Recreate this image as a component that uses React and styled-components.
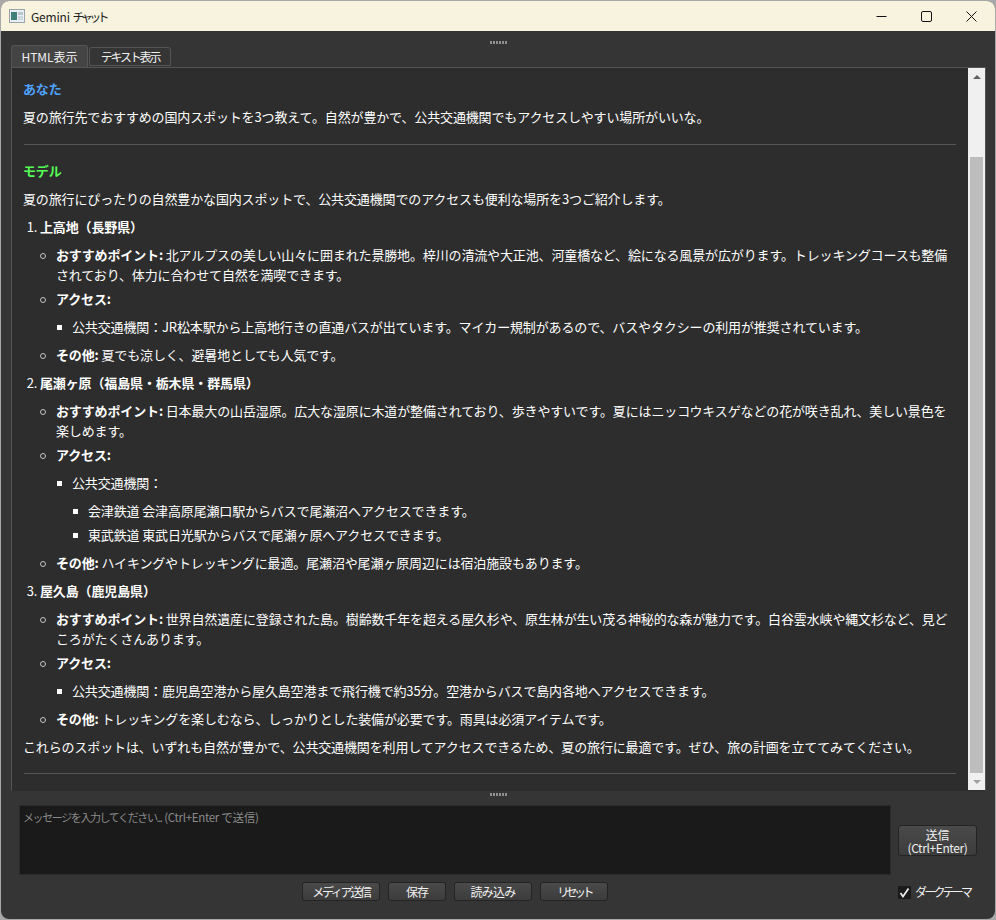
import React from "react";
import styled, { createGlobalStyle } from "styled-components";

const Global = createGlobalStyle`
  html, body { margin: 0; padding: 0; background: #9a9a9a; }
  #root { width: 996px; height: 920px; overflow: hidden; }
`;
const Page = styled.div`
  width: 996px; height: 920px; box-sizing: border-box; padding: 1px; background: #a8a8a8;
`;
const Win = styled.div`
  height: 100%; display: flex; flex-direction: column; border-radius: 8px; overflow: hidden; background: #353535;
  font-family: "Noto Sans CJK JP", "Noto Sans", sans-serif; font-size: 13px; color: #fff;
`;
const Squeeze = styled.span`
  letter-spacing: ${p => p.$ls}px;
  ${p => p.$fs ? `font-size: ${p.$fs}px;` : ""}
`;
const TitleBar = styled.div`
  height: 30px; flex: none; background: #f8f3de; display: flex; align-items: center; padding-left: 8px; color: #222;
  font-size: 12px;
`;
const TitleText = styled.span` margin-left: 6px; flex: 1; `;
const WinBtn = styled.div`
  width: 45px; height: 30px; display: flex; align-items: center; justify-content: center; margin-right: ${p => p.$mr || 0}px;
`;
const Grip = styled.div`
  height: ${p => p.$h}px; flex: none; display: flex; align-items: center; justify-content: center; padding-top: ${p => p.$pt || 0}px; padding-bottom: ${p => p.$pb || 0}px; box-sizing: border-box;
`;
const GripDots = styled.div`
  width: 17px; height: 3px; flex: none;
  background: repeating-linear-gradient(90deg, #8f8f8f 0 2px, transparent 2px 3px);
`;
const Body = styled.div`
  flex: none; padding: 0 10px;
`;
const Tabs = styled.div`
  display: flex; align-items: flex-end; height: 23px; gap: 1px;
`;
const Tab = styled.div`
  height: ${p => p.$on ? 22 : 19}px; width: ${p => p.$w}px; box-sizing: border-box; display: flex; align-items: center; justify-content: center;
  margin-bottom: ${p => p.$on ? 0 : 1}px;
  background: ${p => p.$on ? "#444" : "#353535"}; border: 1px solid #555; border-bottom: ${p => p.$on ? "none" : "1px solid #555"}; border-radius: 3px 3px 0 0; font-size: 12px; color: #f0f0f0;
`;
const Pane = styled.div`
  height: 724px; box-sizing: border-box; width: 975px; display: flex; background: #2d2d2d; border: 1px solid #555; border-bottom-color: #2d2d2d;
`;
const Content = styled.div`
  flex: 1; min-width: 0; padding: 11px 12px 0 11px; overflow: hidden; line-height: 20px; letter-spacing: -0.14px;
`;
const Sender = styled.div`
  font-weight: 700; color: ${p => p.$c}; margin-bottom: 8px;
`;
const Para = styled.p` margin: 0 0 8px; `;
const Rule = styled.div`
  height: 1px; background: #555; margin: ${p => p.$t}px 0 16px 1px;
`;
const Ol = styled.ol` margin: 0; padding: 0 0 0 17px; list-style: decimal; `;
const OlItem = styled.li`
  margin-bottom: 8px; font-weight: 700;
  &::marker { font-weight: 400; }
`;
const Ul = styled.ul`
  margin: 8px 0 0; padding: 0 0 0 16px; list-style: none; font-weight: 400;
`;
const Li = styled.li`
  position: relative;
  margin-bottom: ${p => p.$mb ?? 4}px;
  &:last-child { margin-bottom: 0; }
  &::before {
    content: ""; position: absolute; box-sizing: border-box; top: 8px;
    ${p => p.$square
      ? "left: -15px; width: 5px; height: 5px; background: #fff;"
      : "left: -16px; width: 6px; height: 6px; border: 1px solid #c4c4c4; border-radius: 50%;"}
  }
`;
const Strong = styled.strong` font-weight: 700; `;

const Bar = styled.div`
  width: 17px; flex: none; background: #f0f0f0; display: flex; flex-direction: column; align-items: center; height: 100%;
`;
const Arrow = styled.div`
  width: 0; height: 0; border-left: 4px solid transparent; border-right: 4px solid transparent; flex: none;
  ${p => p.$down ? "border-top: 4px solid #a0a0a0;" : "border-bottom: 4px solid #606060;"}
  margin-top: 7px;
`;
const Thumb = styled.div`
  width: 13px; height: 616px; background: #bdbdbd; margin-top: 78px; flex: none;
`;
const Bottom = styled.div`
  display: grid; grid-template-columns: 872px 1fr; column-gap: 7px; padding-left: 18px;
`;
const Input = styled.div`
  height: 70px; box-sizing: border-box; background: #1a1a1a; border: 1px solid #2b2b2b; padding: 2px 3px; font-size: 12px; line-height: 17px; color: #8a8a8a;
`;
const SendCol = styled.div`
  display: flex; align-items: flex-end; padding-bottom: 19px;
`;
const Btn = styled.div`
  width: ${p => p.$w}px; height: ${p => p.$h || 19}px; box-sizing: border-box; display: flex; align-items: center; justify-content: center; text-align: center;
  background: linear-gradient(#4a4a4a, #3c3c3c); border: 1px solid #242424; border-radius: 3px; font-size: 12px; line-height: 13px; color: #f0f0f0;
  letter-spacing: ${p => p.$ls || 0}px;
`;
const BtnLines = styled.div`
  display: flex; flex-direction: column; align-items: center;
`;
const BtnRow = styled.div`
  display: flex; justify-content: center; gap: 8px; padding-top: 7px;
`;
const CheckWrap = styled.div`
  display: flex; align-items: center; gap: 4px; padding-top: 8px; font-size: 12px; line-height: 14px; color: #f0f0f0;
`;
const Box = styled.div`
  width: 13px; height: 13px; background: #1a1a1a; display: flex; align-items: center; justify-content: center;
`;

const sections = [
  { t: "上高地（長野県）", point: "北アルプスの美しい山々に囲まれた景勝地。梓川の清流や大正池、河童橋など、絵になる風景が広がります。トレッキングコースも整備されており、体力に合わせて自然を満喫できます。",
    access: <Li $square $mb={0}>公共交通機関：JR松本駅から上高地行きの直通バスが出ています。マイカー規制があるので、バスやタクシーの利用が推奨されています。</Li>,
    other: "夏でも涼しく、避暑地としても人気です。" },
  { t: "尾瀬ヶ原（福島県・栃木県・群馬県）", point: "日本最大の山岳湿原。広大な湿原に木道が整備されており、歩きやすいです。夏にはニッコウキスゲなどの花が咲き乱れ、美しい景色を楽しめます。",
    access: <Li $square>公共交通機関：
      <Ul><Li $square>会津鉄道 会津高原尾瀬口駅からバスで尾瀬沼へアクセスできます。</Li><Li $square>東武鉄道 東武日光駅からバスで尾瀬ヶ原へアクセスできます。</Li></Ul></Li>,
    other: "ハイキングやトレッキングに最適。尾瀬沼や尾瀬ヶ原周辺には宿泊施設もあります。" },
  { t: "屋久島（鹿児島県）", point: "世界自然遺産に登録された島。樹齢数千年を超える屋久杉や、原生林が生い茂る神秘的な森が魅力です。白谷雲水峡や縄文杉など、見どころがたくさんあります。",
    access: <Li $square>公共交通機関：鹿児島空港から屋久島空港まで飛行機で約35分。空港からバスで島内各地へアクセスできます。</Li>,
    other: "トレッキングを楽しむなら、しっかりとした装備が必要です。雨具は必須アイテムです。" },
];

export default function App() {
  return (
    <Page>
      <Global />
      <Win>
        <TitleBar>
          <svg width="16" height="14" viewBox="0 0 16 14"><rect x="0.5" y="0.5" width="15" height="13" fill="#e8eef2" stroke="#9aa4ac"/><rect x="2" y="3" width="6" height="8" fill="#3f7f78"/><rect x="9" y="3" width="5" height="3" fill="#b9c6d0"/><rect x="9" y="7" width="5" height="4" fill="#cfd8df"/></svg>
          <TitleText><Squeeze $ls={-0.2}>Gemini</Squeeze> <Squeeze $ls={-3.6}>チャット</Squeeze></TitleText>
          <WinBtn><svg width="11" height="11" viewBox="0 0 11 11"><path d="M0.5 5.5h10" stroke="#111" strokeWidth="1"/></svg></WinBtn>
          <WinBtn><svg width="11" height="11" viewBox="0 0 11 11"><rect x="0.5" y="0.5" width="10" height="10" rx="1.5" fill="none" stroke="#111"/></svg></WinBtn>
          <WinBtn $mr={1}><svg width="11" height="11" viewBox="0 0 11 11"><path d="M0.5 0.5l10 10M10.5 0.5l-10 10" stroke="#111" strokeWidth="1"/></svg></WinBtn>
        </TitleBar>
        <Grip $h={13} $pt={9}><GripDots /></Grip>
        <Body>
          <Tabs><Tab $on $w={77}>HTML表示</Tab><Tab $w={82}><Squeeze $ls={-2.2}>テキスト表示</Squeeze></Tab></Tabs>
          <Pane>
            <Content>
              <Sender $c="#4da3ff">あなた</Sender>
              <Para>夏の旅行先でおすすめの国内スポットを3つ教えて。自然が豊かで、公共交通機関でもアクセスしやすい場所がいいな。</Para>
              <Rule $t={17} />
              <Sender $c="#55ff55">モデル</Sender>
              <Para>夏の旅行にぴったりの自然豊かな国内スポットで、公共交通機関でのアクセスも便利な場所を3つご紹介します。</Para>
              <Ol>
                {sections.map(s => (
                  <OlItem key={s.t}>{s.t}
                    <Ul>
                      <Li><Strong>おすすめポイント:</Strong> {s.point}</Li>
                      <Li $mb={8}><Strong>アクセス:</Strong>
                        <Ul>{s.access}</Ul>
                      </Li>
                      <Li><Strong>その他:</Strong> {s.other}</Li>
                    </Ul>
                  </OlItem>
                ))}
              </Ol>
              <Para>これらのスポットは、いずれも自然が豊かで、公共交通機関を利用してアクセスできるため、夏の旅行に最適です。ぜひ、旅の計画を立ててみてください。</Para>
              <Rule $t={16} />
            </Content>
            <Bar><Arrow /><Thumb /><Arrow $down /></Bar>
          </Pane>
        </Body>
        <Grip $h={14} $pb={8}><GripDots /></Grip>
        <Bottom>
          <Input><Squeeze $ls={-1.4} $fs={11}>メッセージを入力してください...</Squeeze> <Squeeze $ls={-0.3} $fs={11.5}>(Ctrl+Enter で送信)</Squeeze></Input>
          <SendCol><Btn $w={79} $h={31}><BtnLines><span>送信</span><Squeeze $ls={-0.4}>(Ctrl+Enter)</Squeeze></BtnLines></Btn></SendCol>
          <BtnRow>
            <Btn $w={78} $ls={-2.3}>メディア送信</Btn><Btn $w={58} $ls={-1}>保存</Btn><Btn $w={78} $ls={-0.7}>読み込み</Btn><Btn $w={68} $ls={-3.6}>リセット</Btn>
          </BtnRow>
          <CheckWrap>
            <Box><svg width="11" height="11" viewBox="0 0 11 11"><path d="M1.5 6l2.5 3.5L9.5 1.5" fill="none" stroke="#e8e8e8" strokeWidth="1.8"/></svg></Box>
            <Squeeze $ls={-2.8}>ダークテーマ</Squeeze>
          </CheckWrap>
        </Bottom>
      </Win>
    </Page>
  );
}
